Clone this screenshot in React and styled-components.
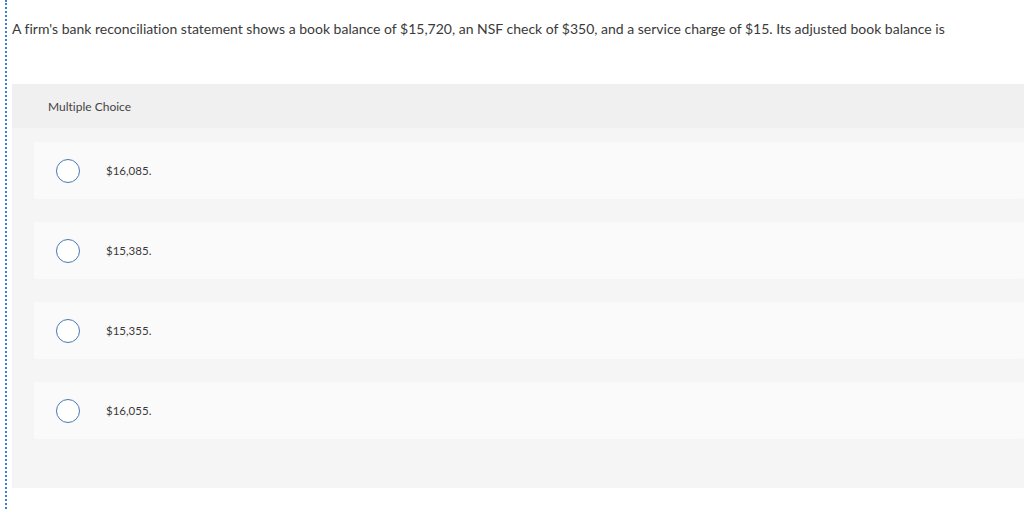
import React from 'react'
import styled, { createGlobalStyle } from 'styled-components'

const GlobalStyle = createGlobalStyle`
    html, body {
        margin: 0;
        padding: 0;
        background: #ffffff;
    }
    body {
        font-family: Lato, "Open Sans", "Liberation Sans", sans-serif;
        color: #333333;
        font-variant-ligatures: none;
    }
`;

const options = ['$16,085.', '$15,385.', '$15,355.', '$16,055.'];

function App() {
    return (
        <>
            <GlobalStyle />
            <PageStyled>
                <div className="question">
                    A firm's bank reconciliation statement shows a book balance of $15,720, an NSF check of $350, and a service charge of $15. Its adjusted book balance is
                </div>
                <Panel>
                    <PanelHeader>Multiple Choice</PanelHeader>
                    <OptionList>
                        {
                            options.map((opt) => {
                                return (
                                    <Option key={opt}>
                                        <Radio />
                                        <span>{opt}</span>
                                    </Option>
                                )
                            })
                        }
                    </OptionList>
                </Panel>
            </PageStyled>
        </>
    )
}

const PageStyled = styled.div`
    min-height: 509px;
    margin-left: 5px;
    border-left: 2px dotted #3d7fd6;
    padding: 20px 0 20px 5px;
    box-sizing: border-box;
    .question{
        font-size: 14px;
        line-height: 18px;
        color: #3a3a3a;
        margin-bottom: 46px;
    }
`;

const Panel = styled.div`
    background: #f5f5f5;
`;

const PanelHeader = styled.div`
    background: #f0f0f0;
    height: 44px;
    display: flex;
    align-items: center;
    padding-left: 36px;
    font-size: 12px;
    color: #444;
`;

const OptionList = styled.div`
    display: flex;
    flex-direction: column;
    gap: 23px;
    padding: 14px 0 49px 22px;
`;

const Option = styled.div`
    height: 57px;
    background: #fafafa;
    border-radius: 2px;
    display: flex;
    align-items: center;
    padding-left: 22px;
    font-size: 11.5px;
    color: #3a3a3a;
    span{
        margin-left: 26px;
    }
`;

const Radio = styled.div`
    width: 22px;
    height: 22px;
    border-radius: 50%;
    border: 1.5px solid #4a78ae;
    background: #ffffff;
`;

export default App
